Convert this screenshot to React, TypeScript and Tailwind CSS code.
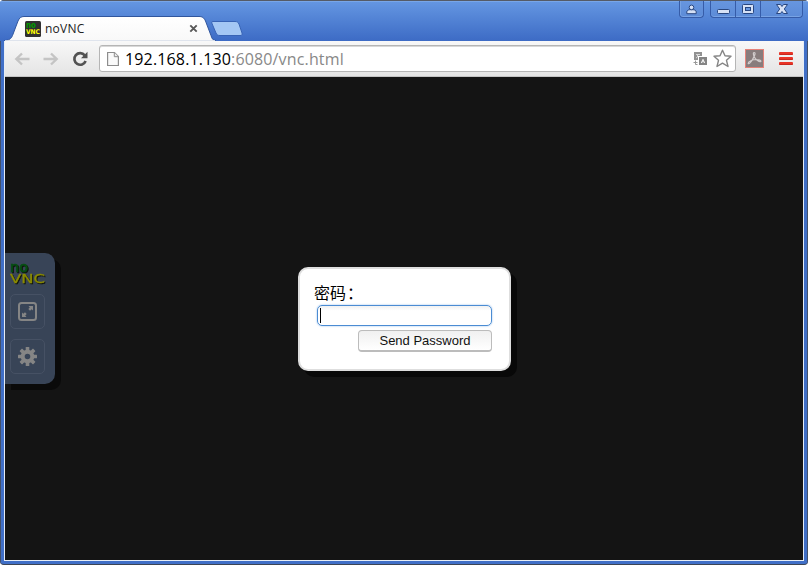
import React from "react";

const UI = "font-['Open_Sans','Noto_Sans',sans-serif]";

function Favicon() {
  return (
    <svg className="block h-4 w-4" viewBox="0 0 16 16" fontFamily="DejaVu Sans, sans-serif" fontWeight="700">
      <rect width="16" height="16" rx="1.5" fill="#303030" />
      <text x="1" y="7" fontSize="8" fill="#009a00" textLength="10" lengthAdjust="spacingAndGlyphs">no</text>
      <text x="1" y="13" fontSize="6.500" fill="#ffff00" textLength="14" lengthAdjust="spacingAndGlyphs">VNC</text>
    </svg>
  );
}

function Tab() {
  return (
    <div className="relative h-[25px] w-[212px]">
      <svg className="absolute inset-0 h-[25px] w-[212px]" viewBox="0 0 212 25">
        <defs>
          <linearGradient id="tab" x1="0" y1="0" x2="0" y2="1">
            <stop offset="0" stopColor="#ffffff" />
            <stop offset="1" stopColor="#f8f8f8" />
          </linearGradient>
        </defs>
        <path d="M0 25V24.5C5 24.5 7 23 8.5 19.5L14 5C15.500 1.800 17 .5 20 .5H195C198 .5 200 1.500 201.500 5L207 19.500C208 23 209 24.500 212 24.500V25Z" fill="url(#tab)" stroke="#31569d" strokeWidth="1" />
        <path d="M1 25H211" stroke="#f8f8f8" strokeWidth="1.400" />
      </svg>
      <div className="relative flex h-full items-center pl-[21px] pr-[18px]">
        <Favicon />
        <span className={`ml-1 flex-1 text-[12px] leading-none tracking-[0.25px] text-[#222] ${UI}`}>noVNC</span>
        <svg className="h-[9px] w-[9px]" viewBox="0 0 9 9">
          <path d="M1.300 1.300L7.700 7.700M7.700 1.300L1.300 7.700" stroke="#585858" strokeWidth="1.900" />
        </svg>
      </div>
    </div>
  );
}

function WindowControls() {
  return (
    <div className="flex h-[17px] items-start">
      <div className="flex h-[17px] w-[25px] items-center justify-center rounded-b-[4px] border border-t-0 border-[#365ca8] bg-gradient-to-b from-[#6796df] to-[#5c8bd7] shadow-[inset_0_-1px_0_#78a3e4,inset_1px_0_0_#78a3e4]">
        <svg className="h-[11px] w-[11px]" viewBox="0 0 11 11">
          <path d="M.8 9.700V8C.8 6.500 2 5.900 3.800 5.700H7.200C9 5.900 10.200 6.500 10.200 8V9.700Z" fill="#d6e1f5" stroke="#294780" />
          <circle cx="5.500" cy="3.400" r="2.300" fill="#d6e1f5" stroke="#294780" />
        </svg>
      </div>
      <div className="ml-[6px] flex h-[17px] w-[93px] rounded-b-[4px] border border-t-0 border-[#365ca8] bg-gradient-to-b from-[#6796df] to-[#5c8bd7] shadow-[inset_0_-1px_0_#78a3e4]">
        <div className="flex w-[25px] items-end justify-center border-r border-[#365ca8] pb-[2px]">
          <svg className="h-[6px] w-[13px]" viewBox="0 0 13 6">
            <rect x=".5" y=".5" width="12" height="4" rx="1" fill="#d6e1f5" stroke="#294780" />
          </svg>
        </div>
        <div className="flex w-[25px] items-center justify-center border-r border-[#365ca8] pb-[2px]">
          <svg className="h-[11px] w-[12px]" viewBox="0 0 12 11">
            <rect x=".5" y="1.500" width="11" height="9" rx="1" fill="#d6e1f5" stroke="#294780" />
            <rect x="3.500" y="4.500" width="5" height="3" fill="#6796df" stroke="#294780" />
          </svg>
        </div>
        <div className="flex flex-1 items-center justify-center pb-[2px]">
          <svg className="h-[11px] w-[12px]" viewBox="0 0 12 11">
            <path d="M.5 1.500H4.500L6 3.500L7.500 1.500H11.500L8.300 6L11.500 10.500H7.500L6 8.500L4.500 10.500H.5L3.700 6Z" fill="#d6e1f5" stroke="#294780" />
          </svg>
        </div>
      </div>
    </div>
  );
}

function TitleBar() {
  return (
    <div className="flex h-[41px] items-start justify-between border-t border-[#555b66] bg-gradient-to-b from-[#6597e2] to-[#3d6bc5] pl-[4px] pr-[5px] shadow-[inset_0_1px_0_#78a6e8]">
      <div className="flex h-full items-end">
        <Tab />
        <svg className="mb-[4px] ml-[-5px] h-[17px] w-[34px]" viewBox="0 0 34 17">
          <path d="M2 1.500H24C26 1.500 27 2 28 4L31 13C31.500 15 31 15.500 29 15.500H9C7 15.500 6 15 5 13L1.200 4C.5 2.500 .5 1.500 2 1.500Z" fill="#a4c7f4" stroke="#3863b5" />
        </svg>
      </div>
      <WindowControls />
    </div>
  );
}

function Arrow({ flip }: { flip?: boolean }) {
  return (
    <svg className={flip ? "h-[14px] w-[16px] -scale-x-100" : "h-[14px] w-[16px]"} viewBox="0 0 16 14">
      <path d="M8 1.500L2.300 7L8 12.500M2.500 7H15.500" fill="none" stroke="#c4c4c4" strokeWidth="2.400" />
    </svg>
  );
}

function Toolbar() {
  return (
    <div className="flex h-[36px] shrink-0 items-center border-b border-[#c4c4c4] bg-gradient-to-b from-[#f8f8f8] to-[#e4e4e4] pl-[9px] pr-[9px]">
      <Arrow />
      <span className="w-[13px]" />
      <Arrow flip />
      <svg className="ml-[13px] mr-px h-[16px] w-[16px]" viewBox="0 0 16 16">
        <path d="M12.700 4.300A5.800 5.800 0 1 0 13.600 10" fill="none" stroke="#525252" strokeWidth="2.700" />
        <path d="M15.500 .8V7.300H9Z" fill="#525252" />
      </svg>
      <div className="ml-[10px] flex h-[27px] w-[637px] items-center rounded-[3px] border border-[#b5b5b5] bg-white pl-[7px] pr-[3px] shadow-[inset_0_1px_0_#d8d8d8]">
        <svg className="h-[16px] w-[12px]" viewBox="0 0 12 16">
          <path d="M.6 1.500H7.500L11.400 5.500V14.500H.6Z" fill="#fafafa" stroke="#8d8d8d" strokeWidth="1.200" />
          <path d="M7.300 1.500V5.700H11.400" fill="#eee" stroke="#8d8d8d" />
        </svg>
        <span className={`ml-[6px] flex-1 whitespace-nowrap text-[16px] leading-none tracking-[0.15px] text-[#888] ${UI}`}>
          <span className="text-black">192.168.1.130</span>:6080/vnc.html
        </span>
        <svg className="h-[14px] w-[15px]" viewBox="0 0 15 14">
          <path d="M1 0H9V4H5V8H1Z" fill="#929292" />
          <path d="M3 2.500H7M4.500 3V5L3 6" fill="none" stroke="#d8d8d8" />
          <rect x="6" y="5" width="8" height="8" fill="#858585" />
          <path d="M8.300 11L10 7.300L11.700 11M9 9.800H11" fill="none" stroke="#f2f2f2" />
          <path d="M.5 10.500H4.500M2.500 8.500V12.500H4.500" fill="none" stroke="#999" />
        </svg>
        <svg className="ml-[5px] h-[19px] w-[19px]" viewBox="0 0 19 19">
          <path d="M9.500 1.200L12 6.700L18 7.300L13.500 11.300L15 17.500L9.500 14.200L4 17.500L5.500 11.300L1 7.300L7 6.700Z" fill="#fff" stroke="#858585" strokeWidth="1.400" strokeLinejoin="round" />
        </svg>
      </div>
      <svg className="ml-[9px] h-[19px] w-[19px]" viewBox="0 0 19 19">
        <rect x=".5" y=".5" width="18" height="18" fill="#887c7c" stroke="#e58279" />
        <path d="M9 3.500C11.500 3.500 9 8 7.500 10.500C5.500 14 3.500 15.500 3.200 14.300C3 12.500 8 10.500 11 10.500C14 10.500 16.500 11.500 15.800 12.500C14.500 13.500 10.500 10.500 9.300 8C8.300 6 8 3.500 9 3.500Z" fill="none" stroke="#d2cccc" strokeWidth="1.200" />
      </svg>
      <div className="ml-[15px] flex w-[14px] flex-col gap-[2px]">
        <span className="h-[3px] rounded-[1px] border-b border-[#c8281e] bg-[#e93427]" />
        <span className="h-[3px] rounded-[1px] border-b border-[#c8281e] bg-[#e93427]" />
        <span className="h-[3px] rounded-[1px] border-b border-[#c8281e] bg-[#e93427]" />
      </div>
    </div>
  );
}

function Logo() {
  return (
    <svg className="ml-[5px] block h-[24px] w-[37px] overflow-visible drop-shadow-[1px_1px_0_#10140c]" viewBox="0 0 37 24" fontFamily="DejaVu Sans, sans-serif">
      <text x="0" y="9" fontSize="14" fill="#064f12" stroke="#064f12" strokeWidth=".7" textLength="18" lengthAdjust="spacingAndGlyphs">no</text>
      <text x="0" y="19.500" fontSize="12.500" fill="#8c8c00" stroke="#8c8c00" strokeWidth=".3" textLength="35" lengthAdjust="spacingAndGlyphs">VNC</text>
    </svg>
  );
}

const teeth = [0, 45, 90, 135, 180, 225, 270, 315];

function ControlPanel() {
  return (
    <div className="flex h-[131px] w-[50px] flex-col rounded-r-[10px] bg-[#384457] pt-[10px] shadow-[6px_6px_0_#0a0a0a]">
      <Logo />
      <div className="ml-[5px] mt-[7px] flex h-[35px] w-[35px] items-center justify-center rounded-[5px] border border-[#465164]">
        <svg className="h-[19px] w-[19px]" viewBox="0 0 19 19">
          <rect x="1" y="1" width="17" height="17" rx="2.500" fill="none" stroke="#858585" strokeWidth="2" />
          <path d="M10.500 4H15V8.500L13.700 7.200L12 8.800L10.300 7.100L11.800 5.400ZM8.500 15H4V10.500L5.300 11.800L7 10.200L8.700 11.900L7.200 13.600Z" fill="#858585" />
        </svg>
      </div>
      <div className="ml-[5px] mt-[10px] flex h-[35px] w-[35px] items-center justify-center rounded-[5px] border border-[#465164]">
        <svg className="h-[19px] w-[19px]" viewBox="0 0 19 19">
          {teeth.map((angle) => (
            <rect key={angle} x="7.700" y="0" width="3.600" height="5" rx=".5" fill="#858585" transform={`rotate(${angle} 9.500 9.500)`} />
          ))}
          <circle cx="9.500" cy="9.500" r="4.800" fill="none" stroke="#858585" strokeWidth="4" />
        </svg>
      </div>
    </div>
  );
}

function PasswordDialog() {
  return (
    <div className="ml-[243px] mt-px flex h-[104px] w-[213px] flex-col rounded-[10px] border-2 border-[#dedede] bg-white pl-[15px] pt-[13px] shadow-[6px_6px_0_#080808]">
      <label className="ml-[-1px] block h-[23px] text-[16px] leading-[20px] text-black font-['Noto_Sans_CJK_SC',sans-serif]">
        密码<span className="ml-px">：</span>
      </label>
      <div className="ml-[2px] flex h-[21px] w-[175px] items-center rounded-[5px] border border-[#4b8cd3] bg-gradient-to-b from-[#f1f1f1] to-white to-25% pl-[2px] shadow-[0_0_2px_#8db8e7]">
        <span className="h-[15px] w-px bg-black" />
      </div>
      <button className="ml-[43px] mt-[4px] h-[22px] w-[134px] rounded-[4px] border border-b-2 border-[#bcbcbc] bg-gradient-to-b from-[#f0f0f0] to-white text-center text-[13px] leading-[18px] text-[#111] font-['Liberation_Sans',Arial,sans-serif]">
        Send Password
      </button>
    </div>
  );
}

export default function App() {
  return (
    <div className="flex h-[565px] w-[808px] flex-col overflow-hidden rounded-[4px] border-b border-[#3c4554] bg-[#406fc7]">
      <TitleBar />
      <div className="flex min-h-0 flex-1 border-x border-[#42516b] px-[3px] pb-[3px]">
        <div className="flex min-w-0 flex-1 flex-col border-x border-b border-[#e6edf5]">
          <Toolbar />
          <main className="flex flex-1 items-center bg-[#141414]">
            <ControlPanel />
            <PasswordDialog />
          </main>
        </div>
      </div>
    </div>
  );
}
